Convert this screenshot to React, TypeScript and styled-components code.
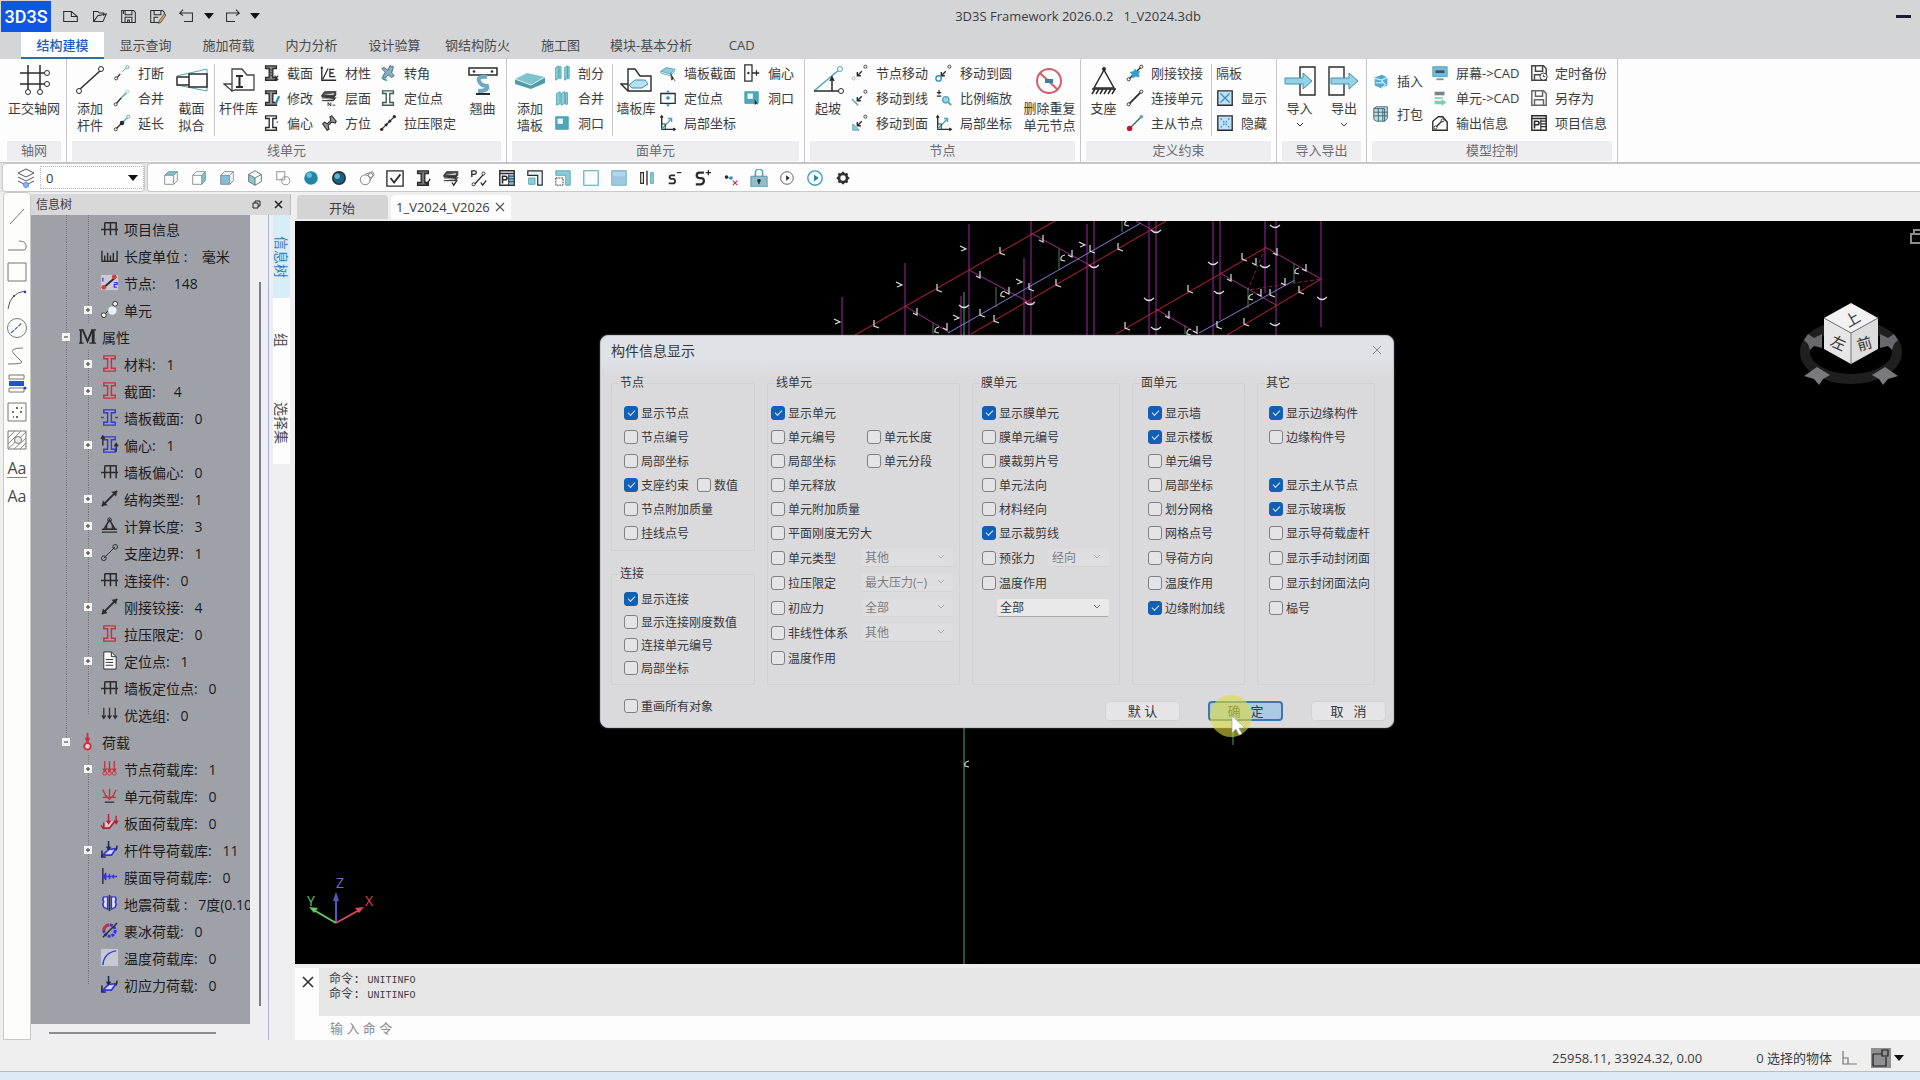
import React, { ReactNode } from "react";
import styled, { createGlobalStyle } from "styled-components";

const uiFont = `"Open Sans", "Noto Sans CJK SC", sans-serif`;

const GlobalStyle = createGlobalStyle`
  *, *::before, *::after { box-sizing: border-box; }
  body { margin: 0; background: #efeff0; font-family: ${uiFont}; font-size: 13px; color: #3c3c3e; overflow: hidden; }
  button, input, select { font-family: inherit; font-size: inherit; color: inherit; }
  button { border: 0; background: none; padding: 0; margin: 0; cursor: default; }
  ul { margin: 0; padding: 0; list-style: none; }
  svg { display: block; flex: none; }
`;

/* ---------- icon drawings ---------- */

const K = "#2b2b2d";
const T = "#4fa6b4";
const TL = "#8ccdd8";
const B = "#2f8fc4";
const BL = "#9fd2ee";
const R = "#c9303f";
const V = "#3436d6";

const iBeam = (c: string, fill = "none") => (
  <path d="M4 2h12v3h-4v10h4v3H4v-3h4V5H4z" stroke={c} strokeWidth="1.5" fill={fill} />
);
const node = (x: number, y: number, c = K, r = 1.7) => <circle cx={x} cy={y} r={r} stroke={c} fill="#fff" />;
const arrowSW = <path d="M12 8l-5 5M7 9v4h4" stroke={K} strokeWidth="1.5" />;
const axes = (
  <>
    <path d="M3 2v15h15M1.5 4L3 2l1.5 2M16 15.5l2 1.500-2 1.500" stroke={K} strokeWidth="1.5" />
    <path d="M3 17L14 5M10 5h4v4" stroke={T} strokeWidth="1.5" />
    <path d="M3 11h4v6" stroke={K} strokeWidth="1" />
  </>
);
const floppy = (c: string) => (
  <>
    <path d="M2 2h13l3 3v13H2z" stroke={c} strokeWidth="1.6" />
    <path d="M6 2v6h8V2M5 18v-6h10v6" stroke={c} strokeWidth="1.6" />
  </>
);
const tableP = (
  <>
    <path d="M2 2h16v16H2z" stroke={K} strokeWidth="1.6" />
    <path d="M2 5h16M5 16V8h3a2 2 0 010 4H5" stroke={K} strokeWidth="1.8" />
    <path d="M12 8h6M12 11h6M12 14h6M12 6v12" stroke={K} strokeWidth="1.3" />
  </>
);
const layers = (
  <>
    <path d="M5 3h13l-3 4H2zM2 7v1.5h13l3-4M2 10h13l3-4M2 13h13l3-4" fill="#555" stroke={K} strokeWidth="1" />
    <path d="M3 11.5h11" stroke="#fff" strokeWidth=".8" />
  </>
);
const cube = (top: string, right: string, front: string) => (
  <>
    <path d="M3 7l4-4h10l-4 4z" fill={top} />
    <path d="M13 7l4-4v10l-4 4z" fill={right} />
    <path d="M3 7h10v10H3z" fill={front} />
    <path d="M3 7l4-4h10v10l-4 4H3zM3 7h10v10M13 7l4-4" stroke="#7c8a90" strokeWidth="1" />
  </>
);
const loadArrows = (c: string) => (
  <path d="M5 2v11M10 2v11M15 2v11M3 10l2 3 2-3M8 10l2 3 2-3M13 10l2 3 2-3" stroke={c} strokeWidth="1.4" />
);
const wallPlate = (
  <>
    <path d="M2 8l6-4 10 2-6 5z" fill={TL} stroke={T} strokeWidth="1" />
    <path d="M2 8v2l10 3 6-5" stroke={T} />
  </>
);

const icons: Record<string, ReactNode> = {
  newFile: <path d="M2 4h9l7 6v6H2zM11 4v6h7" stroke={K} strokeWidth="1.2" />,
  open: <path d="M3 16V4h5l2 2h5v3M3 16l5-7 10-2-4 9z" stroke={K} strokeWidth="1.2" />,
  save: <path d="M2 3h14l2 2v12H2zM6 3v5h8V3M6 17v-6h8v6M9 14h2v3H9zM4 3v4" stroke={K} strokeWidth="1.2" />,
  saveAs: (
    <>
      <path d="M12 17H2V3h14l2 2v2M6 3v5h8V3M6 17v-6h5" stroke={K} strokeWidth="1.2" />
      <path d="M18 7l2 1-6 9-3 1 1-3z" fill="#e4b04a" stroke={K} strokeWidth=".8" />
    </>
  ),
  undo: <path d="M6 2L2 6l4 3M2 6h15v10H7" stroke={K} strokeWidth="1.2" />,
  redo: <path d="M14 2l4 4-4 3M18 6H3v10h10" stroke={K} strokeWidth="1.2" />,

  breakLine: (<><path d="M4 16l4-5" stroke={K} strokeWidth="1.5" /><path d="M10 9l6-6" stroke={T} />{node(3.5, 16)}{node(16, 3.5, T)}</>),
  merge: (<><path d="M4 16L9 10" stroke={K} strokeWidth="1.5" /><path d="M9 10l7-7" stroke={T} strokeWidth="1.5" />{node(3, 17)}{node(16, 3, TL)}</>),
  extend: (<><path d="M3 17l8-8" stroke={K} strokeWidth="1.5" /><path d="M10 10l7-7" stroke={T} strokeWidth="1.5" /><circle cx="10" cy="10" r="2.5" fill={K} />{node(3, 17)}{node(17, 3, T)}</>),
  beamHatch: (<>{iBeam(K, "#8b8b8b")}<path d="M9 6l2 1M9 9l2 1M9 12l2 1" stroke={K} /><path d="M14 13l4 5M18 13l-4 5" stroke={K} strokeWidth="1.2" /></>),
  beamEdit: (<>{iBeam(K, "#9a9a9a")}<path d="M19 8l-4 9" stroke={B} strokeWidth="2.5" /></>),
  beamOffset: (<>{iBeam(K)}<circle cx="17" cy="9" r="1" fill={B} /></>),
  beamTeal: iBeam("#3d5c50"),
  axisE: (<><path d="M2 3v15h16M2 3l-1 2M2 3l1 2" stroke={K} strokeWidth="1.5" /><path d="M3 17L9 5M16 6h-5v8h6M11 10h4" stroke={K} strokeWidth="1.4" /></>),
  layersN: (<>{layers}<path d="M9 19v-4l3 4v-4M14 18h3" stroke={K} /></>),
  orient: (<path d="M3 11l2-2 3 2 4-4-1-4 2-1 5 6-1 2-4-1-4 4 1 4-2 1z" fill="#9a9a9a" stroke={K} strokeWidth="1.2" />),
  rotateBeam: (<><path d="M3 5l3-1 4 3 2-5 4 1-2 7 3 3-3 2-4-3-3 4-3-2 3-5z" fill="#7fb0c8" stroke="#4d6470" /><path d="M3 15a7 7 0 006 3" stroke={B} strokeWidth="1.5" /></>),
  tension: (<><path d="M2 18L18 2" stroke={K} strokeWidth="1.3" /><circle cx="3" cy="17" r="1.8" fill={K} /><circle cx="17" cy="3" r="1.8" fill={K} /><path d="M7 11l2 2M11 7l2 2" stroke={K} strokeWidth="3" /></>),
  split: (<><path d="M3 4l3-2v14l-3 2zM7 3h2v13H7z" fill={TL} stroke={T} /><path d="M13 4l3-2v14l-3 2zM16 3h2v13h-2z" fill={TL} stroke={T} /></>),
  join: (<><path d="M4 5l4-2v13l-4 2zM9 5l4-2v13l-4 2zM14 4h2v13h-2z" fill={TL} stroke={T} /></>),
  hole: (<><path d="M3 3h14v14H3z" fill={T} stroke={T} /><path d="M5 5h6v6H5z" fill="#e9f6f8" /></>),
  wallSection: (<>{wallPlate}<path d="M13 10l1 8 2-2 2 3" fill={K} stroke="#555" /></>),
  wallPoint: (<><path d="M2 5h16v11H2z" stroke={K} strokeWidth="1.4" /><circle cx="10" cy="10" r="2" fill={B} /><path d="M8 4l2-3 2 3zM8 17l2 3 2-3z" fill={B} /></>),
  axes,
  wallOffset: (<><path d="M2 1h8v18H2zM10 10h8M15 7v6" stroke={K} strokeWidth="1.4" /><circle cx="6" cy="10" r="1.3" fill={K} /></>),
  holePick: (<><path d="M2 3h15v13H2z" fill={T} stroke={T} /><path d="M5 5h6v6H5z" fill="#e9f6f8" /><path d="M13 11v7l2-2 2 2z" fill={K} /></>),
  moveNode: (<>{arrowSW}{node(16, 3)}{node(3, 16, "#aaa")}</>),
  moveLine: (<>{arrowSW}{node(16, 3)}<path d="M1 11l7 7" stroke={T} strokeWidth="1.5" /></>),
  moveFace: (<>{arrowSW}{node(16, 3)}<path d="M2 11v7h7z" fill={TL} stroke={T} /></>),
  moveCircle: (<>{arrowSW}{node(16, 3)}<circle cx="4" cy="16" r="3" stroke={B} strokeWidth="1.5" /></>),
  scale: (<><path d="M2 4h5M4.5 1v5M2 8h5" stroke={K} strokeWidth="1.4" /><circle cx="12" cy="12" r="3.5" fill={BL} stroke={T} strokeWidth="1.5" /><path d="M15 15l3 3" stroke={T} strokeWidth="2" /></>),
  rigid: (<><path d="M3 17L17 3" stroke={K} strokeWidth="1.5" /><path d="M10 5l2 3 4 0-2 3 1 4-4-1-4 2 0-4-3-3 4-1z" fill="#31a0cf" />{node(3, 17)}{node(17, 3)}</>),
  linkUnit: (<><path d="M3 17L17 3" stroke={K} strokeWidth="2" />{node(3, 17)}{node(17, 3)}</>),
  masterNode: (<><path d="M4 16L17 3" stroke="#3d6c50" strokeWidth="1.5" /><circle cx="4" cy="16" r="3" fill="#c8142f" /><circle cx="17" cy="3" r="2" fill={T} /></>),
  showX: (<><path d="M2 2h16v16H2z" fill="#bfe0f6" stroke={K} strokeWidth="1.5" /><path d="M5 5l10 10M15 5L5 15" stroke={B} strokeWidth="1.3" /></>),
  hideX: (<><path d="M2 2h16v16H2z" fill="#bfe0f6" stroke={K} strokeWidth="1.5" /><path d="M5 5l10 10M15 5L5 15" stroke={B} strokeWidth="1.3" strokeDasharray="2 2" /></>),
  insert: (<><path d="M3 6l8-3 6 3v9l-7 3-7-3z" fill="#52a9cc" /><path d="M3 7l8 2 6-3M4 12h7v-2l4 4-4 4v-2" stroke="#c8ebf8" strokeWidth="1.4" /></>),
  pack: (<><path d="M2 4l3-2h12v13l-3 3H5l-3-2z" fill="#bfdde4" stroke="#37616b" /><path d="M2 8h15M2 12h15M7 4v14M12 4v14M2 4h12v14" stroke="#37616b" /></>),
  screen: (<><path d="M2 3h16v11H2z" fill="#74b9dc" stroke={T} /><path d="M6 17h8" stroke={T} strokeWidth="2" /><path d="M5 7h10v3H5z" fill="#3e5260" /></>),
  unitCad: (<><path d="M4 3h11v4H4z" fill="#7a8489" /><path d="M4 9h9v2H4z" fill={TL} /><path d="M4 13h8v-2l5 4-5 4v-2H4z" fill="#7fcfae" /></>),
  output: (<><path d="M2 18V8l6-5h5l5 6v9z" stroke={K} strokeWidth="1.5" /><path d="M5 15l8-8" stroke={K} strokeWidth="1.5" />{node(5, 15)}{node(13, 7)}</>),
  timer: (<>{floppy("#444")}<circle cx="15" cy="14" r="4" fill="#fff" stroke={K} /><path d="M15 12v2h2" stroke={K} /></>),
  floppy: floppy("#666"),
  tableP,

  cubeTop: cube("#7cc4d4", "#fff", "#fff"),
  cubeRight: cube("#fff", "#7cc4d4", "#fff"),
  cubeFront: cube("#fff", "#fff", "#86bcd8"),
  cubeIso: (<><path d="M10 2l7 4v8l-7 4-7-4V6z" fill="#fff" /><path d="M3 6l7 4v8l-7-4z" fill="#8fc7cf" /><path d="M10 2l7 4v8l-7 4-7-4V6zM3 6l7 4 7-4M10 10v8" stroke="#5c6a6d" /></>),
  squareCircle: (<><path d="M3 3h9v9H3z" stroke="#888" /><circle cx="13" cy="13" r="4.5" stroke="#888" /></>),
  sphere: (<><circle cx="10" cy="10" r="7.5" fill="#1b87ab" /><circle cx="8" cy="7" r="3" fill="#68bcd4" /></>),
  sphereDark: (<><circle cx="10" cy="10" r="7" fill="#17627f" stroke={K} strokeWidth="1.5" /><circle cx="8" cy="8" r="3" fill="#5fb4ce" /></>),
  orbit: (<><circle cx="8" cy="12" r="5.500" stroke="#777" /><path d="M8 6l8-3 2 3-5 7" stroke="#777" /><circle cx="14" cy="7" r="2.500" stroke="#777" /></>),
  tick: (<><path d="M1 2h18v17H1z" stroke={K} strokeWidth="1.5" /><path d="M5 10l4 5 7-9" stroke={K} strokeWidth="2" /></>),
  beamTick: (<>{iBeam(K, "#777")}<path d="M12 14l2 3 4-6" stroke={K} strokeWidth="1.5" /></>),
  layersTick: (<>{layers}<path d="M11 15l2 3 4-6" stroke={K} strokeWidth="1.5" /></>),
  pTick: (<><path d="M2 9V2h3a2 2 0 010 4H2M4 18L15 6M12 15l2 3 4-5" stroke={K} strokeWidth="1.5" />{node(4, 17)}{node(15, 5)}</>),
  tableBlue: (<>{tableP}<path d="M13 7h4v10h-4z" fill={B} opacity=".6" /></>),
  corner: (<><path d="M2 2h16v16h-5V7H2z" fill="#e8f4f6" stroke={K} strokeWidth="1.3" /><path d="M3 10h7v7H3z" fill={TL} stroke={T} /></>),
  cornerDash: (<><path d="M2 2h16v16h-5V7H2z" fill={TL} stroke={T} /><path d="M2 10h8v8H2z" stroke={K} strokeDasharray="2 1" /></>),
  square: <path d="M2 2h16v16H2z" fill="#fbfeff" stroke={T} strokeWidth="1.2" />,
  squareFill: (<><path d="M2 2h16v16H2z" fill="#b4d6ea" stroke={T} /><path d="M3 8h14v9H3z" fill="#93bcdc" opacity=".6" /></>),
  mirror: (<><path d="M3 4h3v12H3z" stroke={K} strokeWidth="1.3" /><path d="M10 2v16" stroke={K} strokeWidth="1.5" /><path d="M14 4h3v12h-3z" fill={TL} stroke={T} /></>),
  sMinus: (<><path d="M10 7H6q-2 0-2 2t2 2h2q2 0 2 2.500T8 16H3" stroke={K} strokeWidth="2" /><path d="M12 4h5" stroke={K} strokeWidth="1.3" /></>),
  sPlus: (<><path d="M11 4H6Q3 4 3 7t3 3h2q3 0 3 3t-3 4H2" stroke={K} strokeWidth="2.5" /><path d="M13 4h6M16 1v6" stroke={K} strokeWidth="1.5" /></>),
  dotsX: (<><path d="M5 9l6 2" stroke={B} /><circle cx="5" cy="9" r="2" fill={K} /><circle cx="10" cy="10" r="2" fill={B} /><path d="M12 13l5 5M17 13l-5 5" stroke={R} strokeWidth="1.3" /></>),
  lock: (<><path d="M6 9V4a4 4 0 018 0v5" stroke={T} strokeWidth="1.8" /><path d="M1 8h18v12H1z" fill="#8ec0cb" stroke="#5b8e9a" /><circle cx="10" cy="13" r="2" fill={K} /><path d="M10 13v4" stroke={K} strokeWidth="1.5" /></>),
  play: (<><circle cx="10" cy="10" r="7" stroke="#555" /><path d="M9 7l4 3-4 3z" fill={K} /></>),
  playBlue: (<><circle cx="10" cy="10" r="8" stroke="#2e9ec0" strokeWidth="1.5" /><path d="M9 6l5 4-5 4z" fill="#1c7fae" /></>),
  gear: (<><circle cx="10" cy="10" r="4.5" stroke="#333" strokeWidth="3" /><path d="M10 3v2M10 15v2M3 10h2M15 10h2M5 5l1.5 1.5M13.5 13.5L15 15M15 5l-1.5 1.5M6.5 13.5L5 15" stroke="#333" strokeWidth="2.5" /></>),
  stack: (<><path d="M10 1l8 4-8 4-8-4zM2 9l8 4 8-4M2 13l8 4 8-4" stroke="#555" /><circle cx="10" cy="17" r="2.5" fill="#8fb8f0" stroke="#5c86d0" /></>),

  toolLine: <path d="M3 18L17 3" stroke="#777" />,
  toolPoly: <path d="M1 16h16q3-1 2-5t-7-4" stroke="#777" />,
  toolRect: <path d="M1 1h18v18H1z" stroke="#777" />,
  toolArc: (<><path d="M1 19Q3 3 18 1" stroke="#555" /><circle cx="7" cy="6" r="1" fill={K} /><circle cx="18" cy="2" r="1.3" fill={V} /></>),
  toolCircle: (<><circle cx="10" cy="10" r="9.5" stroke="#777" /><path d="M4 15L15 5" stroke="#4c6fb0" strokeWidth="1.3" strokeDasharray="4 1" /></>),
  toolSpline: <path d="M16 2Q1 2 7 8t8 8q0 2-14 2" stroke="#777" />,
  toolTable: (<><path d="M2 1h15v4H2zM2 14h15v4H2z" stroke="#777" /><path d="M2 7h15v5H2z" fill="#2351c8" /><circle cx="18" cy="14" r="1.5" fill={V} /></>),
  toolDots: (<><path d="M1 1h18v18H1z" stroke="#777" /><path d="M10 5v2M5 10h2M13 10h2M10 14v2M6 15h1M14 6h1" stroke="#444" strokeWidth="1.6" /></>),
  toolHatch: (<><path d="M1 1h18v18H1z" stroke="#777" /><path d="M1 8l7-7M1 14L14 1M1 19L19 2M7 19L19 8M13 19l6-6" stroke="#888" /><circle cx="11" cy="10" r="3.5" fill="#eee" stroke="#777" /></>),

  tGrid: <path d="M5 4h12v13M5 4v13M11 4v13M1 11h18" stroke={K} strokeWidth="1.6" />,
  tRuler: <path d="M2 5v11h16V5M5 10v6M8 7v9M11 10v6M14 7v9" stroke={K} strokeWidth="1.5" />,
  tNode: (<><path d="M1 2h18v16H1z" fill="#c9cad4" /><path d="M3 16L17 4" stroke={K} strokeWidth="2" /><circle cx="4" cy="15" r="2.5" fill="#e03a3a" /><circle cx="15" cy="4" r="2.5" fill="#e03a3a" /><path d="M3 5v4M15 10h3v2h-3v3h3" stroke={V} strokeWidth="1.3" /></>),
  tUnit: (<><path d="M4 16L16 4" stroke={K} /><circle cx="13" cy="11" r="4.5" fill="#e8f2f0" />{node(4, 16, K, 2.5)}{node(16, 4, K, 2.5)}</>),
  tM: (<><path d="M1 3h5M14 3h5M1 17h5M12 17h7" stroke={K} strokeWidth="1.5" /><path d="M3 17V3M5 3l5 12 5-12" stroke={K} strokeWidth="2" /><path d="M16 3v14" stroke={K} strokeWidth="3" /></>),
  tBeamRed: iBeam(R),
  tBeamBlue: (<>{iBeam(V)}<path d="M1 10h3M16 10h3" stroke={V} strokeWidth="1.5" /></>),
  tBeamOff: (<>{iBeam(V)}<path d="M3 1v10M1 4l2-3 2 3M17 18v-8M15 12l2-3 2 3" stroke={K} strokeWidth="1.5" /></>),
  tBoldLine: (<><path d="M2 18L18 2" stroke={K} strokeWidth="2" /><path d="M2 18l1-6 5 5zM18 2l-1 6-5-5z" fill={K} /></>),
  tSupport: (<><path d="M10 4l6 10H4z" stroke={K} strokeWidth="1.5" /><circle cx="10" cy="4" r="2" stroke={K} /><path d="M2 14h16M2 17h16M7 9v5M13 9v5" stroke={K} strokeWidth="1.3" /></>),
  tLink: (<><path d="M4 16L16 4" stroke={K} /><circle cx="4" cy="16" r="2.5" stroke={K} /><circle cx="16" cy="4" r="2.5" stroke={K} /></>),
  tDoc: (<><path d="M4 1h8l5 5v13H4z" fill="#fff" stroke={K} /><path d="M12 1v5h5M6 9h8M6 12h8M6 15h8" stroke={K} /></>),
  tDown: (<><path d="M4 3v11M10 3v11M16 3v11M2 11l2 3 2-3M8 11l2 3 2-3M14 11l2 3 2-3" stroke={K} strokeWidth="1.3" /></>),
  tLoad: (<><path d="M10 1v12" stroke={R} strokeWidth="2" /><path d="M7 6l3 6 3-6z" fill={R} /><circle cx="10" cy="15" r="3.5" fill="#e7d7dc" stroke={R} strokeWidth="2" /></>),
  tLoad3: (<>{loadArrows(R)}<circle cx="5" cy="15" r="2" stroke={R} /><circle cx="10" cy="15" r="2" stroke={R} /><circle cx="15" cy="15" r="2" stroke={R} /></>),
  tLoadX: (<><path d="M3 4l4 8M17 4l-4 8M10 3v9M3 12h14M5 9l5 5 5-5" stroke={R} strokeWidth="1.5" /><path d="M5 17h10" stroke={K} strokeWidth="1.3" /></>),
  tLoadF: (<><path d="M4 10v6h6l6-8" fill="#dfc6cb" stroke="#b51f35" strokeWidth="1.8" /><path d="M9 1v10M17 3v8M7 8l2 3 2-3M15 8l2 3 2-3M1 13l3 4" stroke="#b51f35" strokeWidth="1.4" /></>),
  tLoadB: (<><path d="M3 16l6-6 8-1-5 7z" fill="#cdd6ff" stroke={V} strokeWidth="1.8" /><path d="M9 1v9M7 7l2 3 2-3M2 11v7M18 6l-1 5M1 18h5" stroke="#23264f" strokeWidth="1.6" /></>),
  tMembrane: (<><path d="M3 1v17" stroke={K} strokeWidth="1.5" /><path d="M3 10h15M6 6v8M10 7v6M14 8v4M3 10l3-3M3 10l3 3" stroke={V} strokeWidth="1.5" /></>),
  tQuake: (<><path d="M8 3H4q-2 3 0 5-2 3 0 6l4 2zM12 3h4q2 3 0 5 2 3 0 6l-4 2z" fill="#dfe3ff" stroke={V} strokeWidth="1.5" /><path d="M10 1v17" stroke={K} strokeWidth="1.7" /></>),
  tIce: (<><circle cx="10" cy="10" r="6" stroke={V} strokeWidth="3" strokeDasharray="3 1" /><path d="M4 10a6 6 0 016-6" stroke={R} strokeWidth="3" /><path d="M3 17L18 2" stroke={K} strokeWidth="1.5" /></>),
  tTemp: (<><path d="M1 1h18v18H1z" fill="#c6c9d2" /><path d="M3 18Q4 5 17 3" stroke={V} strokeWidth="1.5" /></>),

  bigGrid: (<><path d="M2 8h26M2 19h26M10 0v26M22 0v26" stroke={K} strokeWidth="1.5" />{node(29, 8, K, 2.5)}{node(29, 19, K, 2.5)}{node(10, 27, K, 2.5)}{node(22, 27, K, 2.5)}</>),
  bigLine: (<><path d="M5 25L27 5" stroke={K} strokeWidth="1.5" />{node(5, 26, K, 2.5)}{node(27, 4, K, 2.5)}</>),
  bigFit: (<><path d="M1 11l30-7M1 20l30 6M31 4v22" stroke={T} /><path d="M1 12h12v8H1zM13 9h18v13H13z" fill="#fff" stroke={K} strokeWidth="1.5" /></>),
  bigLib: (<><path d="M9 26V4h10l5 6h7v15H12zM9 19H1l8 7" stroke="#444" strokeWidth="1.3" /><path d="M13 11h7M13 22h7M16.500 11v11" stroke={K} strokeWidth="2" /></>),
  bigWarp: (<><path d="M2 3h28v7H2z" fill="#fff" stroke={K} strokeWidth="1.5" /><circle cx="7" cy="6.500" r="1.300" fill={K} /><circle cx="25" cy="6.500" r="1.300" fill={K} /><path d="M20 12q-10-1-8 4t8 5q2 5-9 5" stroke="#6ea9c4" strokeWidth="4" /><path d="M9 29h14" stroke={K} strokeWidth="2" /></>),
  bigPlate: (<><path d="M1 14l12-6 18 4-14 8z" fill="#7fc4cd" /><path d="M1 14v5l16 5v-4zM17 20v4l14-6v-6z" fill="#4f9dab" /><path d="M1 14l16 6 14-8" stroke="#d3f0f2" /></>),
  bigWallLib: (<><path d="M8 26V4h7l5 7h11v15H11zM8 19H1l7 7" stroke={K} strokeWidth="1.4" /><path d="M9 20l6-5h10l3 4-6 4H12z" fill="#b9e2f0" stroke={B} /></>),
  bigSlope: (<><path d="M2 26L28 4" stroke={T} strokeWidth="1.5" /><path d="M2 26h26M20 26V13M18 16l2-4 2 4" stroke={K} strokeWidth="1.5" />{node(28, 4, T, 2.5)}{node(29, 26, K, 2.5)}</>),
  bigDelete: (<><circle cx="15" cy="16" r="12" stroke="#d2606a" strokeWidth="2" /><path d="M6 8l18 17" stroke="#d2606a" strokeWidth="2" /><path d="M11 14h8v4h-8z" fill="#3f7f97" /></>),
  bigSupport: (<><path d="M16 5l10 18H6z" stroke={K} strokeWidth="1.5" /><circle cx="16" cy="4" r="2" fill={K} /><path d="M4 24h24M7 24l-3 5M11 24l-3 5M15 24l-3 5M19 24l-3 5M23 24l-3 5M27 24l-3 5" stroke={K} strokeWidth="1.5" /></>),
  bigImport: (<><path d="M16 2h15v28H16z" stroke={K} strokeWidth="1.4" /><path d="M1 13h18V8l9 8-9 8v-5H1z" fill="#93d2e8" stroke="#3e93b5" /></>),
  bigExport: (<><path d="M1 2h15v28H1z" stroke={K} strokeWidth="1.4" /><path d="M3 13h18V8l9 8-9 8v-5H3z" fill="#93d2e8" stroke="#3e93b5" /></>),
};

const Icon = ({ name, size = 20 }: { name: string; size?: number }) => (
  <svg width={size} height={size} viewBox={name.startsWith("big") ? "0 0 32 32" : "0 0 20 20"} fill="none" aria-hidden="true">
    {icons[name]}
  </svg>
);

const Caret = () => (
  <svg width="10" height="6" viewBox="0 0 10 6" aria-hidden="true"><path d="M0 0h10L5 6z" fill="#111" /></svg>
);

const Chevron = ({ color = "#777" }: { color?: string }) => (
  <svg width="8" height="6" viewBox="0 0 8 6" fill="none" aria-hidden="true"><path d="M1 1l3 3 3-3" stroke={color} /></svg>
);

/* ---------- frame ---------- */

const Shell = styled.div`
  display: flex;
  flex-direction: column;
  height: 100vh;
`;

const TitleBar = styled.header`
  display: grid;
  grid-template-columns: 1fr auto 1fr;
  align-items: center;
  height: 32px;
  background: #d4d5d7;
`;

const QuickBar = styled.div`
  display: flex;
  align-items: center;
  gap: 13px;
`;

const Logo = styled.div`
  display: grid;
  place-items: center;
  align-self: flex-start;
  width: 50px;
  height: 31px;
  margin: 1px -2px 0 1px;
  background: #0f56e4;
  color: #fff;
  font: 500 18px/31px "Roboto", sans-serif;
`;

const QuickButton = styled.button<{ $narrow?: boolean }>`
  width: ${(p) => (p.$narrow ? 10 : 16)}px;
  height: 20px;
  margin: 0 ${(p) => (p.$narrow ? -3 : 0)}px;
  display: grid;
  place-items: center;
`;

const DocTitle = styled.h1`
  margin: 0;
  padding-left: 236px;
  font-size: 13px;
  font-weight: 400;
  white-space: pre;
`;

const WindowButtons = styled.div`
  display: flex;
  justify-content: flex-end;
  padding-right: 9px;
`;

const MinimizeButton = styled.button`
  width: 15px;
  height: 3px;
  background: #1c1c2c;
`;

const TabBar = styled.nav`
  display: flex;
  height: 27px;
  padding-left: 21px;
  background: #d4d5d7;
`;

const RibbonTab = styled.button<{ $active?: boolean }>`
  min-width: 83px;
  padding: 0 8px;
  color: ${(p) => (p.$active ? "#1f5cb8" : "#4a4a4c")};
  font-weight: ${(p) => (p.$active ? 500 : 400)};
  background: ${(p) => (p.$active ? "#fff" : "transparent")};
  border-bottom: 2px solid ${(p) => (p.$active ? "#2b6ea8" : "transparent")};
`;

/* ---------- ribbon ---------- */

const Ribbon = styled.section`
  display: flex;
  height: 104px;
  padding-left: 2px;
  background: #fdfdfd;
  border-bottom: 1px solid #c3c3c6;
`;

const Group = styled.div`
  display: flex;
  flex-direction: column;
  border-right: 1px solid #c6c6ca;
`;

const GroupBody = styled.div`
  display: flex;
  height: 82px;
`;

const GroupName = styled.div`
  height: 20px;
  margin: 0 5px;
  background: #eeeef0;
  color: #6b6b70;
  line-height: 18px;
  text-align: center;
`;

const BigButton = styled.button<{ $w: number }>`
  display: flex;
  flex-direction: column;
  align-items: center;
  width: ${(p) => p.$w}px;
  padding-top: 6px;
  line-height: 17px;
  white-space: pre;
  svg + span { margin-top: 3px; }
  span + svg { margin-top: 5px; }
`;

const SmallColumn = styled.div<{ $w: number; $pad?: number; $spread?: boolean }>`
  display: flex;
  flex-direction: column;
  width: ${(p) => p.$w}px;
  padding: ${(p) => (p.$spread ? 9 : 1)}px 0 0 ${(p) => p.$pad || 0}px;
  gap: ${(p) => (p.$spread ? 8 : 0)}px;
`;

const SmallButton = styled.button`
  display: flex;
  align-items: center;
  gap: 7px;
  height: 25px;
  white-space: nowrap;
`;

const Divider = styled.div`
  width: 1px;
  height: 72px;
  margin-top: 5px;
  background: #c6c6ca;
`;

type Part =
  | { big: string; icon: string; w: number; menu?: boolean }
  | { small: [string, string][]; w: number; pad?: number; spread?: boolean }
  | "divider";

const ribbon: { name: string; parts: Part[] }[] = [
  { name: "轴网", parts: [{ big: "正交轴网", icon: "bigGrid", w: 64 }] },
  {
    name: "线单元",
    parts: [
      { big: "添加\n杆件", icon: "bigLine", w: 46 },
      { small: [["breakLine", "打断"], ["merge", "合并"], ["extend", "延长"]], w: 56 },
      { big: "截面\n拟合", icon: "bigFit", w: 45 },
      "divider",
      { big: "杆件库", icon: "bigLib", w: 47 },
      { small: [["beamHatch", "截面"], ["beamEdit", "修改"], ["beamOffset", "偏心"]], w: 58 },
      { small: [["axisE", "材性"], ["layersN", "层面"], ["orient", "方位"]], w: 59 },
      { small: [["rotateBeam", "转角"], ["beamTeal", "定位点"], ["tension", "拉压限定"]], w: 80 },
      { big: "翘曲", icon: "bigWarp", w: 47 },
    ],
  },
  {
    name: "面单元",
    parts: [
      { big: "添加\n墙板", icon: "bigPlate", w: 46 },
      { small: [["split", "剖分"], ["join", "合并"], ["hole", "洞口"]], w: 59 },
      "divider",
      { big: "墙板库", icon: "bigWallLib", w: 46 },
      { small: [["wallSection", "墙板截面"], ["wallPoint", "定位点"], ["axes", "局部坐标"]], w: 84 },
      { small: [["wallOffset", "偏心"], ["holePick", "洞口"]], w: 61 },
    ],
  },
  {
    name: "节点",
    parts: [
      { big: "起坡", icon: "bigSlope", w: 46 },
      { small: [["moveNode", "节点移动"], ["moveLine", "移动到线"], ["moveFace", "移动到面"]], w: 84 },
      { small: [["moveCircle", "移动到圆"], ["scale", "比例缩放"], ["axes", "局部坐标"]], w: 84 },
      { big: "删除重复\n单元节点", icon: "bigDelete", w: 61 },
    ],
  },
  {
    name: "定义约束",
    parts: [
      { big: "支座", icon: "bigSupport", w: 45 },
      { small: [["rigid", "刚接铰接"], ["linkUnit", "连接单元"], ["masterNode", "主从节点"]], w: 85 },
      "divider",
      { small: [["", "隔板"], ["showX", "显示"], ["hideX", "隐藏"]], w: 64, pad: 4 },
    ],
  },
  {
    name: "导入导出",
    parts: [
      { big: "导入", icon: "bigImport", w: 45, menu: true },
      { big: "导出", icon: "bigExport", w: 44, menu: true },
    ],
  },
  {
    name: "模型控制",
    parts: [
      { small: [["insert", "插入"], ["pack", "打包"]], w: 64, pad: 5, spread: true },
      { small: [["screen", "屏幕->CAD"], ["unitCad", "单元->CAD"], ["output", "输出信息"]], w: 99 },
      { small: [["timer", "定时备份"], ["floppy", "另存为"], ["tableP", "项目信息"]], w: 87 },
    ],
  },
];

const RibbonPart = ({ part }: { part: Part }) => {
  if (part === "divider") return <Divider />;
  if ("big" in part)
    return (
      <BigButton $w={part.w}>
        <Icon name={part.icon} size={32} />
        <span>{part.big}</span>
        {part.menu && <Chevron color="#333" />}
      </BigButton>
    );
  return (
    <SmallColumn $w={part.w} $pad={part.pad} $spread={part.spread}>
      {part.small.map(([icon, label]) => (
        <SmallButton key={label}>
          {icon && <Icon name={icon} size={18} />}
          {label}
        </SmallButton>
      ))}
    </SmallColumn>
  );
};

/* ---------- view toolbar ---------- */

const ViewBar = styled.div`
  display: flex;
  gap: 2px;
  height: 29px;
  padding-left: 2px;
  background: #e4e4e6;
`;

const LayerPicker = styled.div`
  position: relative;
  display: flex;
  align-items: center;
  gap: 4px;
  width: 143px;
  padding-left: 13px;
  background: #fdfdfd;
  border: 1px solid #c9c9cc;
  border-radius: 4px;
  > svg:last-child { position: absolute; right: 6px; top: 11px; pointer-events: none; }
`;

const LayerSelect = styled.select`
  appearance: none;
  flex: 1;
  height: 23px;
  padding: 0 5px;
  border: 1px dotted #b4b4b8;
  background: #fff;
`;

const ViewTools = styled.div`
  display: flex;
  flex: 1;
  align-items: center;
  padding-left: 9px;
  background: #fdfdfd;
  border: 1px solid #c9c9cc;
  border-right: 0;
  border-radius: 4px 0 0 4px;
`;

const ViewButton = styled.button`
  display: grid;
  place-items: center;
  width: 28px;
  height: 24px;
`;

const viewTools = [
  "cubeTop", "cubeRight", "cubeFront", "cubeIso", "squareCircle", "sphere", "sphereDark", "orbit", "tick",
  "beamTick", "layersTick", "pTick", "tableBlue", "corner", "cornerDash", "square", "squareFill", "mirror",
  "sMinus", "sPlus", "dotsX", "lock", "play", "playBlue", "gear",
];

/* ---------- left side ---------- */

const Main = styled.main`
  display: flex;
  flex: 1;
  min-height: 0;
`;

const Toolbox = styled.aside`
  display: flex;
  flex-direction: column;
  align-items: center;
  width: 28px;
  margin-left: 3px;
  padding-top: 9px;
  background: #fdfdfc;
  border: 1px solid #c9c9cc;
  border-radius: 4px 4px 0 0;
`;

const ToolButton = styled.button`
  display: grid;
  place-items: center;
  width: 26px;
  height: 28px;
`;

const TextTool = styled.span<{ $lined?: boolean }>`
  color: #4a4a4c;
  font-size: 16px;
  line-height: 18px;
  border-bottom: 1px solid ${(p) => (p.$lined ? "#888" : "transparent")};
`;

const Panel = styled.aside`
  display: flex;
  flex-direction: column;
  width: 260px;
  margin-right: 4px;
  padding-top: 2px;
  background: #efeff2;
`;

const PanelTitle = styled.div`
  display: flex;
  align-items: center;
  gap: 13px;
  height: 21px;
  padding: 0 7px 1px 5px;
  background: #d8d8d8;
  border-right: 1px solid #bdbdc0;
  font-size: 12px;
  span { flex: 1; }
`;

const PanelBody = styled.div`
  display: flex;
  flex: 1;
  min-height: 0;
`;

const TreeColumn = styled.div`
  display: flex;
  flex-direction: column;
  flex: 1;
  min-width: 0;
`;

const Tree = styled.ul`
  flex: 1;
  overflow: hidden;
  background: #9fa1a8;
  color: #1b1b20;
  font-size: 14px;
`;

const TreeRow = styled.li`
  display: flex;
  align-items: center;
  height: 27px;
  padding-left: 24px;
  white-space: pre;
  > svg { margin: 0 5px 0 1px; }
`;

const Guide = styled.span<{ $line: "none" | "full" | "half" }>`
  display: grid;
  flex: none;
  place-items: center;
  width: 22px;
  height: 27px;
  background: repeating-linear-gradient(#74767e 0 1px, transparent 1px 2px) center top / 1px
    ${(p) => (p.$line === "none" ? "0" : p.$line === "half" ? "50%" : "100%")} no-repeat;
`;

const Expander = styled.button`
  width: 8px;
  height: 8px;
  background: #f4f4f6;
`;

const ScrollX = styled.div`
  height: 16px;
  padding: 8px 34px 0 18px;
  &::before { content: ""; display: block; height: 2px; background: #8b8b8d; }
`;

const ScrollY = styled.div`
  width: 19px;
  padding: 67px 0 34px 9px;
  border-right: 1px solid #a9aed4;
  &::before { content: ""; display: block; width: 2px; height: 100%; background: #7f7f83; }
`;

const SideTabs = styled.div`
  display: flex;
  flex-direction: column;
  width: 22px;
  padding-left: 4px;
`;

const SideTab = styled.button<{ $active?: boolean }>`
  width: 17px;
  height: 83px;
  writing-mode: vertical-rl;
  text-orientation: sideways;
  line-height: 17px;
  font-size: 14px;
  color: ${(p) => (p.$active ? "#2f7db8" : "#4a4a4c")};
  background: ${(p) => (p.$active ? "#d8edfa" : "#fdfdfd")};
`;

type TreeItem = { icon: string; text: string; top?: boolean; more?: boolean };
const tree: TreeItem[] = [
  { icon: "tGrid", text: "项目信息" },
  { icon: "tRuler", text: "长度单位 :    毫米" },
  { icon: "tNode", text: "节点:     148" },
  { icon: "tUnit", text: "单元", more: true },
  { icon: "tM", text: "属性", top: true },
  { icon: "tBeamRed", text: "材料:   1", more: true },
  { icon: "tBeamRed", text: "截面:     4", more: true },
  { icon: "tBeamBlue", text: "墙板截面:   0" },
  { icon: "tBeamOff", text: "偏心:   1", more: true },
  { icon: "tGrid", text: "墙板偏心:   0" },
  { icon: "tBoldLine", text: "结构类型:   1", more: true },
  { icon: "tSupport", text: "计算长度:   3", more: true },
  { icon: "tLink", text: "支座边界:   1", more: true },
  { icon: "tGrid", text: "连接件:   0" },
  { icon: "tBoldLine", text: "刚接铰接:   4", more: true },
  { icon: "tBeamRed", text: "拉压限定:   0" },
  { icon: "tDoc", text: "定位点:   1", more: true },
  { icon: "tGrid", text: "墙板定位点:   0" },
  { icon: "tDown", text: "优选组:   0" },
  { icon: "tLoad", text: "荷载", top: true },
  { icon: "tLoad3", text: "节点荷载库:   1", more: true },
  { icon: "tLoadX", text: "单元荷载库:   0" },
  { icon: "tLoadF", text: "板面荷载库:   0" },
  { icon: "tLoadB", text: "杆件导荷载库:   11", more: true },
  { icon: "tMembrane", text: "膜面导荷载库:   0" },
  { icon: "tQuake", text: "地震荷载 :   7度(0.10g)" },
  { icon: "tIce", text: "裹冰荷载:   0" },
  { icon: "tTemp", text: "温度荷载库:   0" },
  { icon: "tLoadB", text: "初应力荷载:   0" },
];
const lastTop = 19;

const ExpandMark = ({ open, label }: { open?: boolean; label: string }) => (
  <Expander aria-label={label} aria-expanded={!!open}>
    <svg width="8" height="8" viewBox="0 0 8 8" aria-hidden="true">
      <path d={open ? "M2 4h4" : "M2 4h4M4 2v4"} stroke="#333" />
    </svg>
  </Expander>
);

const InfoTree = () => (
  <Tree>
    {tree.map((item, i) => {
      const outer = i < lastTop ? "full" : i === lastTop ? "half" : "none";
      const endsBranch = i === lastTop - 1 || i === tree.length - 1;
      return (
        <TreeRow key={i}>
          <Guide $line={outer}>{item.top && <ExpandMark open label={item.text} />}</Guide>
          {!item.top && (
            <Guide $line={endsBranch ? "half" : "full"}>{item.more && <ExpandMark label={item.text} />}</Guide>
          )}
          <Icon name={item.icon} size={19} />
          {item.text}
        </TreeRow>
      );
    })}
  </Tree>
);

/* ---------- work area ---------- */

const Work = styled.div`
  display: flex;
  flex-direction: column;
  flex: 1;
  min-width: 0;
`;

const DocTabs = styled.div`
  display: flex;
  align-items: flex-end;
  gap: 3px;
  height: 29px;
  padding: 0 0 2px 2px;
  background: #efefef;
`;

const DocTab = styled.button<{ $active?: boolean }>`
  display: flex;
  align-items: center;
  justify-content: center;
  gap: 5px;
  min-width: 91px;
  height: 24px;
  padding: 0 6px 0 5px;
  border-radius: 4px 4px 0 0;
  background: ${(p) => (p.$active ? "#fdfdfd" : "#d4d4d4")};
`;

const Viewport = styled.section`
  position: relative;
  flex: 1;
  min-height: 0;
  overflow: hidden;
  background: #000;
`;

const ModelDrawing = styled.svg`
  position: absolute;
  left: 0;
  top: 0;
`;

const CubeDrawing = styled.svg`
  position: absolute;
  right: 15px;
  top: 75px;
`;

const RestoreMark = styled.svg`
  position: absolute;
  right: 0;
  top: 8px;
`;

const PointerMark = styled.svg`
  position: absolute;
  left: 912px;
  top: 471px;
  pointer-events: none;
`;

const redLines = "M855 335L1055 221M971 334L1166 221M1116 334L1265 248M1227 335L1321 279";
const blueLines = "M948 333L1141 223M1199 333L1295 280";
const columns =
  "M842 297V335M905 263V335M969 224V335M1031 221V335M1024 258V335M1087 224V335M1094 221V335M1149 221V335M1156 221V335M1213 221V335M1220 221V320M1265 221V293M1276 221V335M1321 221V327M961 296V335";
const braces =
  "M905 306L950 333M969 270L1034 305M1031 233L1093 267M1136 221L1156 232M1156 309L1198 334M1220 273L1276 305M1265 247L1321 279";
const stubs = "M1059 249V269M996 287V307M933 323V334M1122 221V232M1294 263V283M1248 288V308M1185 325V334";

const marks: { shape: string; at: [number, number][] }[] = [
  { shape: "M-1-4V2L4 4", at: [[875, 324], [938, 288], [1001, 251], [995, 319], [1057, 283], [1119, 247], [981, 313], [1030, 287], [1091, 249], [1189, 289], [1126, 326], [1243, 257], [1245, 322], [1300, 290], [1218, 325], [1271, 293]] },
  { shape: "M1-4V3L-3 1", at: [[916, 312], [979, 275], [1042, 239], [1071, 254], [1008, 291], [946, 327], [1168, 315], [1230, 278], [1276, 252], [1305, 268], [1260, 293], [1255, 262], [1284, 282], [1196, 330]] },
  { shape: "M2-3Q-3-2-2 2L2 3", at: [[1003, 294], [1063, 258], [937, 330], [1251, 297], [1297, 271], [1189, 332], [1127, 223], [967, 764]] },
  { shape: "M-4-3L2 0L-3 2", at: [[838, 322], [900, 285], [964, 249], [1083, 245], [1020, 282], [957, 318]] },
  { shape: "M-5-2Q0 3 5-2", at: [[964, 307], [1030, 304], [1094, 267], [1156, 232], [1149, 300], [1156, 329], [1213, 264], [1219, 293], [1265, 267], [1275, 227], [1275, 325], [1322, 299]] },
];

const StructureModel = () => (
  <ModelDrawing width="1100" height="743" viewBox="295 221 1100 743" fill="none" aria-hidden="true">
    <path d="M964 292V964M1233 700V745" stroke="#46a87c" />
    <path d={columns} stroke="#a029a2" />
    <path d={braces} stroke="#a32a8a" />
    <path d="M1265 248L1248 290L1321 279" stroke="#7b1f4a" strokeDasharray="4 2" />
    <path d={redLines} stroke="#c41f38" />
    <path d={blueLines} stroke="#7c7fd0" />
    <path d={stubs} stroke="#4f7a5a" />
    {marks.map((m) => m.at.map(([x, y]) => <path key={`${x}-${y}`} d={m.shape} transform={`translate(${x} ${y})`} stroke="#d5e2de" strokeWidth="1.2" />))}
    <path d="M336 923V894" stroke="#5457c8" strokeWidth="2" />
    <path d="M336 923L312 909" stroke="#5fce62" strokeWidth="2" />
    <path d="M336 923L361 909" stroke="#dc4858" strokeWidth="2" />
    <path d="M333 901l3-9 3 9z" fill="#5457c8" />
    <path d="M309 907l9 1-4 5z" fill="#5fce62" />
    <path d="M364 907l-9 1 4 5z" fill="#dc4858" />
    <g fontFamily="Open Sans, sans-serif" fontSize="14">
      <text x="336" y="888" fill="#6a6bd0">Z</text>
      <text x="307" y="906" fill="#63c566">Y</text>
      <text x="365" y="906" fill="#d84a5c">X</text>
    </g>
  </ModelDrawing>
);

const ViewCube = () => (
  <CubeDrawing width="110" height="96" viewBox="0 0 110 96" fill="none" aria-label="视图立方">
    <ellipse cx="56" cy="56" rx="46" ry="27" stroke="#1f1f1f" strokeWidth="10" />
    <path d="M13 38l6 4 8-4v14l-8-2-4 4-2-6-4-4zM99 38l-6 4-8-4v14l8-2 4 4 2-6 4-4z" fill="#69696c" />
    <path d="M9 80l13-9 13 8-7 4-4 6-5-6zM103 80l-13-9-13 8 7 4 4 6 5-6z" fill="#7a7a7d" />
    <path d="M56 7l27 15-27 15-27-15z" fill="#f2f2f2" />
    <path d="M29 22l27 15v31L29 53z" fill="#e6e6e6" />
    <path d="M83 22L56 37v31l27-15z" fill="#dcdcdc" />
    <path d="M29 22l27 15 27-15M56 37v31" stroke="#777" />
    <g fontFamily="Noto Sans CJK SC, sans-serif" fontSize="15" fill="#333" textAnchor="middle">
      <text transform="translate(60 28) rotate(-30)">上</text>
      <text transform="translate(41 52) rotate(24)">左</text>
      <text transform="translate(71 53) rotate(-16)">前</text>
    </g>
  </CubeDrawing>
);

/* ---------- dialog ---------- */

const Dialog = styled.form`
  position: absolute;
  left: 305px;
  top: 114px;
  width: 794px;
  background: #dadadc;
  border: 1px solid #c4c6c8;
  border-radius: 8px;
  box-shadow: 0 0 2px #fff6;
  font-size: 12px;
  color: #37373a;
`;

const DialogTitle = styled.header`
  display: flex;
  justify-content: space-between;
  align-items: center;
  height: 39px;
  padding: 0 11px 12px 10px;
  border-radius: 8px 8px 0 0;
  background: linear-gradient(#dfe3e6, #dfe2e6 60%, #dadadc);
  font-size: 14px;
`;

const DialogBody = styled.div`
  display: grid;
  grid-template-columns: 144px 193px 148px 113px 118px;
  column-gap: 12px;
  padding-left: 10px;
`;

const Stack = styled.div`
  display: flex;
  flex-direction: column;
  justify-content: space-between;
`;

const Box = styled.fieldset<{ $stacked?: boolean; $dense?: boolean }>`
  min-width: 0;
  margin: 0;
  padding: ${(p) => (p.$dense ? 5 : 10)}px 0 ${(p) => (p.$stacked ? 5 : 14)}px;
  border: 1px solid #d0d0d3;
  border-radius: 2px;
`;

const BoxTitle = styled.legend`
  margin-left: 7px;
  padding: 0 1px;
  line-height: 16px;
`;

const Rows = styled.div<{ $pad: number; $dense?: boolean }>`
  display: grid;
  grid-template-rows: ${(p) => (p.$dense ? "repeat(4, 23px)" : "repeat(6, 24px)")};
  grid-auto-rows: 25px;
  padding-left: ${(p) => p.$pad}px;
`;

const Line = styled.div`
  display: flex;
  align-items: center;
  white-space: nowrap;
`;

const Lead = styled.div<{ $w?: number }>`
  width: ${(p) => (p.$w ? p.$w + "px" : "auto")};
`;

const CheckLabel = styled.label`
  display: flex;
  align-items: center;
  gap: 3px;
`;

const CheckBox = styled.input`
  appearance: none;
  display: grid;
  place-items: center;
  width: 14px;
  height: 14px;
  margin: 0;
  border: 1px solid #808084;
  border-radius: 3px;
  background: #e4e4e6;
  &:checked { background: #1260b4; border-color: #1260b4; }
  &:checked::after {
    content: "";
    width: 7px;
    height: 4px;
    margin-bottom: 2px;
    border: solid #dce9f6;
    border-width: 0 0 1px 1px;
    transform: rotate(-45deg);
  }
`;

const SelectFrame = styled.div<{ $w: number; $indent?: number; $on?: boolean }>`
  display: grid;
  grid-template-columns: 1fr 16px;
  align-items: center;
  width: ${(p) => p.$w}px;
  height: 18px;
  margin-left: ${(p) => p.$indent || 0}px;
  background: ${(p) => (p.$on ? "#e9e9ea" : "#dedee0")};
  border-bottom: 1px solid ${(p) => (p.$on ? "#a9a9ad" : "#d3d3d6")};
  border-radius: 2px;
  color: ${(p) => (p.$on ? "#37373a" : "#7c7c80")};
  svg { grid-area: 1 / 2; pointer-events: none; }
`;

const Select = styled.select`
  appearance: none;
  grid-area: 1 / 1 / 2 / 3;
  min-width: 0;
  height: 17px;
  padding: 0 3px;
  border: 0;
  background: none;
  opacity: 1;
  line-height: 17px;
`;

const DialogFooter = styled.footer`
  display: flex;
  align-items: flex-start;
  gap: 28px;
  height: 42px;
  padding: 12px 7px 0 23px;
  label { flex: 1; }
`;

const DialogButton = styled.button<{ $primary?: boolean }>`
  width: 75px;
  height: 20px;
  margin-top: 4px;
  border: ${(p) => (p.$primary ? "2px solid #3f77a8" : "1px solid #d2d2d4")};
  border-radius: 4px;
  background: ${(p) => (p.$primary ? "#adc9e6" : "#e5e5e7")};
  font-size: 13px;
  line-height: 15px;
  white-space: pre;
`;

type Choice = { value: string; w: number; indent?: number; on?: boolean };
type Entry = { text?: string; on?: boolean; lead?: number; also?: string; choice?: Choice };

const Check = ({ text, on }: { text: string; on?: boolean }) => (
  <CheckLabel>
    <CheckBox type="checkbox" defaultChecked={on} />
    {text}
  </CheckLabel>
);

const Choose = ({ choice, label }: { choice: Choice; label: string }) => (
  <SelectFrame $w={choice.w} $indent={choice.indent} $on={choice.on}>
    <Select aria-label={label} disabled={!choice.on} defaultValue={choice.value}>
      <option>{choice.value}</option>
    </Select>
    <Chevron color={choice.on ? "#777" : "#aaa"} />
  </SelectFrame>
);

type GroupProps = { title: string; pad: number; entries: Entry[]; stacked?: boolean; dense?: boolean };

const CheckGroup = ({ title, pad, entries, stacked, dense }: GroupProps) => (
  <Box $stacked={stacked} $dense={dense}>
    <BoxTitle>{title}</BoxTitle>
    <Rows $pad={pad} $dense={dense}>
      {entries.map((e, i) => (
        <Line key={i}>
          {e.text && <Lead $w={e.lead}><Check text={e.text} on={e.on} /></Lead>}
          {e.also && <Check text={e.also} />}
          {e.choice && <Choose choice={e.choice} label={e.text || title} />}
        </Line>
      ))}
    </Rows>
  </Box>
);

const nodeEntries: Entry[] = [
  { text: "显示节点", on: true }, { text: "节点编号" }, { text: "局部坐标" },
  { text: "支座约束", on: true, lead: 73, also: "数值" }, { text: "节点附加质量" }, { text: "挂线点号" },
];
const linkEntries: Entry[] = [
  { text: "显示连接", on: true }, { text: "显示连接刚度数值" }, { text: "连接单元编号" }, { text: "局部坐标" },
];
const lineEntries: Entry[] = [
  { text: "显示单元", on: true },
  { text: "单元编号", lead: 96, also: "单元长度" },
  { text: "局部坐标", lead: 96, also: "单元分段" },
  { text: "单元释放" }, { text: "单元附加质量" }, { text: "平面刚度无穷大" },
  { text: "单元类型", lead: 91, choice: { value: "其他", w: 91 } },
  { text: "拉压限定", lead: 91, choice: { value: "最大压力(−)", w: 91 } },
  { text: "初应力", lead: 91, choice: { value: "全部", w: 91 } },
  { text: "非线性体系", lead: 91, choice: { value: "其他", w: 91 } },
  { text: "温度作用" },
];
const membraneEntries: Entry[] = [
  { text: "显示膜单元", on: true }, { text: "膜单元编号" }, { text: "膜裁剪片号" }, { text: "单元法向" },
  { text: "材料经向" }, { text: "显示裁剪线", on: true },
  { text: "预张力", lead: 67, choice: { value: "经向", w: 60 } },
  { text: "温度作用" },
  { choice: { value: "全部", w: 112, indent: 15, on: true } },
];
const faceEntries: Entry[] = [
  { text: "显示墙", on: true }, { text: "显示楼板", on: true }, { text: "单元编号" }, { text: "局部坐标" },
  { text: "划分网格" }, { text: "网格点号" }, { text: "导荷方向" }, { text: "温度作用" }, { text: "边缘附加线", on: true },
];
const otherEntries: Entry[] = [
  { text: "显示边缘构件", on: true }, { text: "边缘构件号" }, {}, { text: "显示主从节点", on: true },
  { text: "显示玻璃板", on: true }, { text: "显示导荷载虚杆" }, { text: "显示手动封闭面" }, { text: "显示封闭面法向" }, { text: "榀号" },
];

const DisplayDialog = () => (
  <Dialog onSubmit={(e) => e.preventDefault()} aria-label="构件信息显示">
    <DialogTitle>
      构件信息显示
      <button type="button" aria-label="关闭">
        <svg width="10" height="10" viewBox="0 0 10 10" aria-hidden="true"><path d="M1 1l8 8M9 1L1 9" stroke="#88888c" /></svg>
      </button>
    </DialogTitle>
    <DialogBody>
      <Stack>
        <CheckGroup title="节点" pad={12} entries={nodeEntries} stacked />
        <CheckGroup title="连接" pad={12} entries={linkEntries} stacked dense />
      </Stack>
      <CheckGroup title="线单元" pad={3} entries={lineEntries} />
      <CheckGroup title="膜单元" pad={9} entries={membraneEntries} />
      <CheckGroup title="面单元" pad={15} entries={faceEntries} />
      <CheckGroup title="其它" pad={11} entries={otherEntries} />
    </DialogBody>
    <DialogFooter>
      <Check text="重画所有对象" />
      <DialogButton type="button">默 认</DialogButton>
      <DialogButton type="submit" $primary>确   定</DialogButton>
      <DialogButton type="button">取   消</DialogButton>
    </DialogFooter>
  </Dialog>
);

/* ---------- command line and status ---------- */

const CommandArea = styled.section`
  display: grid;
  grid-template: 48px 24px / 23px 1fr;
  margin-top: 4px;
  padding-left: 1px;
  background: #fdfdfd;
`;

const CloseCommand = styled.button`
  align-self: start;
  justify-self: center;
  padding-top: 8px;
`;

const CommandLog = styled.div`
  padding: 5px 10px;
  background: #e6e6e7;
  font: 12px/15px "Liberation Mono", "Noto Sans CJK SC", monospace;
  white-space: pre;
  code { font: 10px/15px "Liberation Mono", monospace; }
`;

const CommandInput = styled.input`
  grid-column: 2;
  padding: 0 11px;
  border: 0;
  background: none;
  font-size: 13px;
  &::placeholder { color: #8a8a8c; opacity: 1; }
`;

const StatusBar = styled.footer`
  display: flex;
  align-items: center;
  justify-content: flex-end;
  height: 31px;
  padding: 4px 0 0;
  background: #efefef;
  span:first-child { margin-right: 54px; }
  span { white-space: nowrap; }
`;

const StatusTools = styled.div`
  display: flex;
  align-items: center;
  gap: 3px;
  margin: 0 16px 0 10px;
`;

const StatusButton = styled.button<{ $on?: boolean }>`
  width: 20px;
  height: 20px;
  margin-left: ${(p) => (p.$on ? 6 : 0)}px;
  background: ${(p) => (p.$on ? "#8f8f91" : "transparent")};
`;

const DesktopEdge = styled.div`
  height: 9px;
  border-top: 1px solid #b4bcc8;
  background: #deeaf5;
`;

const ribbonTabs = ["结构建模", "显示查询", "施加荷载", "内力分析", "设计验算", "钢结构防火", "施工图", "模块-基本分析", "CAD"];
const drawTools = ["toolLine", "toolPoly", "toolRect", "toolArc", "toolCircle", "toolSpline", "toolTable", "toolDots", "toolHatch"];

export default function App() {
  return (
    <Shell>
      <GlobalStyle />
      <TitleBar>
        <QuickBar>
          <Logo>3D3S</Logo>
          <QuickButton aria-label="新建"><Icon name="newFile" size={17} /></QuickButton>
          <QuickButton aria-label="打开"><Icon name="open" size={17} /></QuickButton>
          <QuickButton aria-label="保存"><Icon name="save" size={17} /></QuickButton>
          <QuickButton aria-label="另存为"><Icon name="saveAs" size={17} /></QuickButton>
          <QuickButton aria-label="撤销"><Icon name="undo" size={17} /></QuickButton>
          <QuickButton $narrow aria-label="撤销列表"><Caret /></QuickButton>
          <QuickButton aria-label="重做"><Icon name="redo" size={17} /></QuickButton>
          <QuickButton $narrow aria-label="重做列表"><Caret /></QuickButton>
        </QuickBar>
        <DocTitle>3D3S Framework 2026.0.2   1_V2024.3db</DocTitle>
        <WindowButtons><MinimizeButton aria-label="最小化" /></WindowButtons>
      </TitleBar>
      <TabBar>
        {ribbonTabs.map((t, i) => <RibbonTab key={t} $active={i === 0}>{t}</RibbonTab>)}
      </TabBar>
      <Ribbon>
        {ribbon.map((g) => (
          <Group key={g.name}>
            <GroupBody>{g.parts.map((p, i) => <RibbonPart key={i} part={p} />)}</GroupBody>
            <GroupName>{g.name}</GroupName>
          </Group>
        ))}
      </Ribbon>
      <ViewBar>
        <LayerPicker>
          <Icon name="stack" />
          <LayerSelect aria-label="图层" defaultValue="0"><option>0</option></LayerSelect>
          <Caret />
        </LayerPicker>
        <ViewTools>
          {viewTools.map((t) => <ViewButton key={t} aria-label={t}><Icon name={t} size={18} /></ViewButton>)}
        </ViewTools>
      </ViewBar>
      <Main>
        <Toolbox>
          {drawTools.map((t) => <ToolButton key={t} aria-label={t}><Icon name={t} /></ToolButton>)}
          <ToolButton><TextTool $lined>Aa</TextTool></ToolButton>
          <ToolButton><TextTool>Aa</TextTool></ToolButton>
        </Toolbox>
        <Panel>
          <PanelTitle>
            <span>信息树</span>
            <button aria-label="浮动">
              <svg width="9" height="9" viewBox="0 0 9 9" fill="none" aria-hidden="true"><path d="M3 3V1h5v5H6M1 3h5v5H1z" stroke="#222" /></svg>
            </button>
            <button aria-label="关闭">
              <svg width="9" height="9" viewBox="0 0 9 9" fill="none" aria-hidden="true"><path d="M1 1l7 7M8 1L1 8" stroke="#222" strokeWidth="1.5" /></svg>
            </button>
          </PanelTitle>
          <PanelBody>
            <TreeColumn>
              <InfoTree />
              <ScrollX />
            </TreeColumn>
            <ScrollY />
            <SideTabs>
              <SideTab $active>信息树</SideTab>
              <SideTab>组</SideTab>
              <SideTab>选择集</SideTab>
            </SideTabs>
          </PanelBody>
        </Panel>
        <Work>
          <DocTabs>
            <DocTab>开始</DocTab>
            <DocTab $active>
              1_V2024_V2026
              <svg width="10" height="10" viewBox="0 0 10 10" fill="none" aria-hidden="true"><path d="M1 1l8 8M9 1L1 9" stroke="#555" strokeWidth="1.2" /></svg>
            </DocTab>
          </DocTabs>
          <Viewport>
            <StructureModel />
            <ViewCube />
            <RestoreMark width="10" height="16" viewBox="0 0 10 16" fill="none" aria-hidden="true">
              <path d="M12 5H1v9h11M4 5V1h8" stroke="#8b8b90" strokeWidth="2" />
            </RestoreMark>
            <DisplayDialog />
            <PointerMark width="48" height="52" viewBox="0 0 48 52" aria-hidden="true">
              <circle cx="24" cy="24" r="21" fill="#dcdc3c" opacity=".6" />
              <path d="M25 24v17l4-4 3 6 3-1-3-6h6z" fill="#fff" stroke="#999" strokeWidth=".6" />
            </PointerMark>
          </Viewport>
          <CommandArea>
            <CloseCommand aria-label="关闭命令行">
              <svg width="12" height="12" viewBox="0 0 12 12" fill="none" aria-hidden="true"><path d="M1 1l10 10M11 1L1 11" stroke="#333" strokeWidth="1.6" /></svg>
            </CloseCommand>
            <CommandLog>
              命令: <code>UNITINFO</code>{"\n"}命令: <code>UNITINFO</code>
            </CommandLog>
            <CommandInput aria-label="命令" placeholder="输 入 命 令" />
          </CommandArea>
        </Work>
      </Main>
      <StatusBar>
        <span>25958.11, 33924.32, 0.00</span>
        <span>0 选择的物体</span>
        <StatusTools>
          <StatusButton aria-label="正交">
            <svg width="20" height="20" viewBox="0 0 20 20" fill="none" aria-hidden="true"><path d="M1 3v13h14M1 10h5v6" stroke="#777" strokeWidth="1.2" /></svg>
          </StatusButton>
          <StatusButton $on aria-label="对象捕捉">
            <svg width="20" height="20" viewBox="0 0 20 20" fill="none" aria-hidden="true"><path d="M2 6h9M15 9v9H2V6M11 2h6v6h-6z" stroke="#222" strokeWidth="1.2" /></svg>
          </StatusButton>
          <Caret />
        </StatusTools>
      </StatusBar>
      <DesktopEdge />
    </Shell>
  );
}
